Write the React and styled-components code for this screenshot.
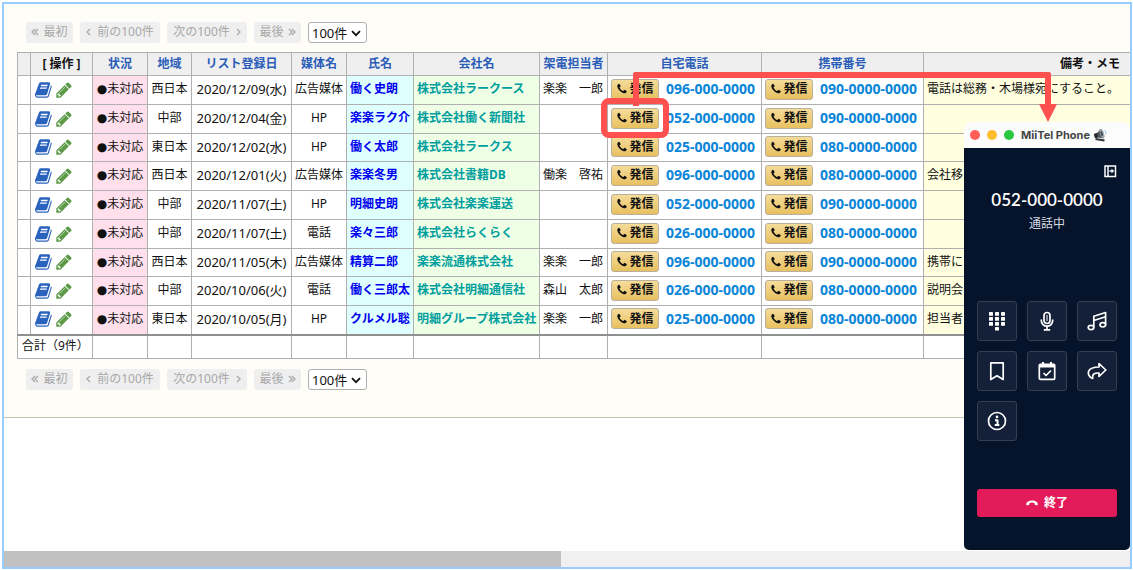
import React from "react";
import styled, { createGlobalStyle } from "styled-components";

const rows = [
  ["西日本", "2020/12/09(水)", "広告媒体", "働く史朗", "株式会社ラークース", "楽楽　一郎", "096-000-0000", "090-0000-0000", "電話は総務・木場様宛にすること。"],
  ["中部", "2020/12/04(金)", "HP", "楽楽ラク介", "株式会社働く新聞社", "", "052-000-0000", "090-0000-0000", ""],
  ["東日本", "2020/12/02(水)", "HP", "働く太郎", "株式会社ラークス", "", "025-000-0000", "080-0000-0000", ""],
  ["西日本", "2020/12/01(火)", "広告媒体", "楽楽冬男", "株式会社書籍DB", "働楽　啓祐", "096-000-0000", "080-0000-0000", "会社移"],
  ["中部", "2020/11/07(土)", "HP", "明細史朗", "株式会社楽楽運送", "", "052-000-0000", "090-0000-0000", ""],
  ["中部", "2020/11/07(土)", "電話", "楽々三郎", "株式会社らくらく", "", "026-000-0000", "080-0000-0000", ""],
  ["西日本", "2020/11/05(木)", "広告媒体", "精算二郎", "楽楽流通株式会社", "楽楽　一郎", "096-000-0000", "090-0000-0000", "携帯に"],
  ["中部", "2020/10/06(火)", "電話", "働く三郎太", "株式会社明細通信社", "森山　太郎", "026-000-0000", "080-0000-0000", "説明会"],
  ["東日本", "2020/10/05(月)", "HP", "クルメル聡", "明細グループ株式会社", "楽楽　一郎", "025-000-0000", "080-0000-0000", "担当者"],
];

const columns = [
  { label: "", width: 13 },
  { label: "[ 操作 ]", width: 62, plain: true },
  { label: "状況", width: 55 },
  { label: "地域", width: 44 },
  { label: "リスト登録日", width: 100 },
  { label: "媒体名", width: 55 },
  { label: "氏名", width: 67 },
  { label: "会社名", width: 126 },
  { label: "架電担当者", width: 68 },
  { label: "自宅電話", width: 154 },
  { label: "携帯番号", width: 162 },
];

const BookIcon = () => (
  <svg width="18" height="18" viewBox="0 0 1792 1792" fill="#2a63bd" aria-hidden="true">
    <path d="M1639 478q40 57 18 129l-275 906q-19 64-76.5 107.5t-122.5 43.5h-923q-77 0-148.5-53.5t-99.5-131.5q-24-67-2-127 0-4 3-27t4-37q1-8-3-21.5t-3-19.5q2-11 8-21t16.5-23.5 16.5-23.5q23-38 45-91.5t30-91.5q3-10 .5-30t-.5-28q3-11 17-28t17-23q21-36 42-92t25-90q1-9-2.5-32t.5-28q4-13 22-30.5t22-22.5q19-26 42.5-84.5t27.5-96.5q1-8-3-25.5t-2-26.5q2-8 9-18t18-23 17-21q8-12 16.5-30.5t15-35 16-36 19.5-32 26.5-23.5 36-11.5 47.5 5.5l-1 3q38-9 51-9h761q74 0 114 56t18 130l-274 906q-36 119-71.5 153.5t-128.5 34.5h-869q-27 0-38 15-11 16-1 43 24 70 144 70h923q29 0 56-15.5t35-41.5l300-987q7-22 5-57 38 15 59 43zm-1064 2q-4 13 2 22.5t20 9.5h608q13 0 25.5-9.5t16.5-22.5l21-64q4-13-2-22.5t-20-9.5h-608q-13 0-25.5 9.5t-16.5 22.5zm-83 256q-4 13 2 22.5t20 9.5h608q13 0 25.5-9.5t16.5-22.5l21-64q4-13-2-22.5t-20-9.5h-608q-13 0-25.5 9.5t-16.5 22.5z" />
  </svg>
);

const PencilIcon = () => (
  <svg width="18" height="18" viewBox="0 0 1792 1792" fill="#5c9a48" aria-hidden="true">
    <path d="M491 1536l91-91-235-235-91 91v107h128v128h107zm523-928q0-22-22-22-10 0-17 7l-542 542q-7 7-7 17 0 22 22 22 10 0 17-7l542-542q7-7 7-17zm-54-192l416 416-832 832h-416v-416zm683 96q0 53-37 90l-166 166-416-416 166-165q36-38 90-38 53 0 91 38l235 234q37 39 37 91z" />
  </svg>
);

const PhoneIcon = () => (
  <svg width="12" height="12" viewBox="0 0 1792 1792" fill="#111" aria-hidden="true">
    <path d="M1600 1240q0 27-10 70.5t-21 68.5q-21 50-122 106-94 51-186 51-27 0-53-3.5t-57.5-12.5-47-14.5-55.5-20.5-49-18q-98-35-175-83-127-79-264-216t-216-264q-48-77-83-175-3-9-18-49t-20.5-55.5-14.5-47-12.5-57.5-3.5-53q0-92 51-186 56-101 106-122 25-11 68.5-21t70.5-10q14 0 21 3 18 6 53 76 11 19 30 54t35 63.5 31 53.5q3 4 17.5 25t21.5 35.5 7 28.5q0 20-28.5 50t-62 55-62 53-28.5 46q0 9 5 22.5t8.5 20.5 14 24 11.5 19q76 137 174 235t235 174q2 1 19 11.5t24 14 20.5 8.5 22.5 5q18 0 46-28.5t53-62 55-62 50-28.5q14 0 28.5 7t35.5 21.5 25 17.5q25 15 53.5 31t63.5 35 54 30q70 35 76 53 3 7 3 21z" />
  </svg>
);

const Chevron = ({ double, right }) => (
  <svg width={double ? 8 : 5} height="8" viewBox={double ? "0 0 8 8" : "0 0 5 8"} fill="none" stroke="currentColor" strokeWidth="1.3" aria-hidden="true">
    {right ? (
      <path d={double ? "M1 1l3 3-3 3M4 1l3 3-3 3" : "M1 1l3 3-3 3"} />
    ) : (
      <path d={double ? "M4 1L1 4l3 3M7 1L4 4l3 3" : "M4 1L1 4l3 3"} />
    )}
  </svg>
);

const SpeakerIcon = () => (
  <svg width="14" height="14" viewBox="0 0 14 14" aria-hidden="true">
    <path d="M1 6l3-1 3.500-4 3 9.500-5.500-1-3 .5z" fill="#4c545c" />
    <path d="M1 6l3-1 1 4.500-3 .5z" fill="#23272b" />
    <ellipse cx="9" cy="5.500" rx="2" ry="5" transform="rotate(-18 9 5.500)" fill="#9aa7b2" />
    <ellipse cx="8.700" cy="5.600" rx=".9" ry="2.600" transform="rotate(-18 8.700 5.600)" fill="#3b4248" />
    <path d="M11.500 2q1.500 1.500 1.500 4" fill="none" stroke="#8fc0e0" />
    <path d="M2.500 11l9 1.500" stroke="#2d3236" strokeWidth="2" />
  </svg>
);

const PanelIcon = () => (
  <svg width="14" height="14" viewBox="0 0 14 14" fill="none" stroke="#fff" strokeWidth="1.500" aria-hidden="true">
    <path d="M2 2h10.500v10.500H2zM5 2v10.500M6.500 7h4" />
    <path d="M8.500 4.500L11 7 8.500 9.500z" fill="#fff" stroke="none" />
  </svg>
);

const HangUpIcon = () => (
  <svg width="12" height="6" viewBox="0 0 12 6" fill="#fff" aria-hidden="true">
    <path d="M6 .5C9 .5 11.800 2 11.800 3.800q0 1-.6 1.600L8.700 4.700 8.400 2.900Q6 2.200 3.600 2.900l-.3 1.800-2.500.7Q.2 4.800.2 3.800.2 2 3 1q1.400-.5 3-.5z" />
  </svg>
);

const icons = {
  キーパッド: (
    <g fill="#fff" stroke="none">
      {[1, 6, 11].map((y) =>
        [2, 8, 14].map((x) => <rect key={`${x}-${y}`} x={x} y={y} width="4" height="3.800" rx=".6" />)
      )}
      <rect x="8" y="16" width="4" height="3.500" rx=".6" />
    </g>
  ),
  ミュート: (
    <>
      <rect x="7" y="1.500" width="6" height="11" rx="3" />
      <path d="M10 4v6" strokeWidth="1" />
      <path d="M4.300 8.500v1a5.700 5.700 0 0 0 11.400 0v-1M10 15.500v3M6.800 18.800h6.400" />
    </>
  ),
  保留: (
    <>
      <ellipse cx="4" cy="16.500" rx="2.800" ry="2.200" />
      <ellipse cx="15.800" cy="13.800" rx="2.800" ry="2.200" />
      <path d="M6.800 16.500V5.200l11.800-3.700v12.300M6.800 9.500l11.800-3.700" />
    </>
  ),
  ブックマーク: <path d="M3.800 1.800h12.400v16.700L10 14.800l-6.200 3.700z" />,
  予定: (
    <>
      <rect x="2.300" y="3.300" width="15.400" height="15" rx="1" />
      <path d="M2.500 5h15" strokeWidth="3" />
      <path d="M6 1v4M14 1v4" strokeWidth="2.200" />
      <path d="M6.500 12l2.500 2.500L14 9.500" />
    </>
  ),
  転送: <path d="M12 2.500l6.800 6.500L12 15.500V12C7.500 11.800 4.800 13 5.800 17.500 2 16.500.6 12.500 1.800 9.800 3.200 6.800 6.500 6.100 12 6z" />,
  情報: (
    <>
      <circle cx="10" cy="10" r="8.500" />
      <path d="M8 9.200h2.500v4.600M7.800 14h4.500" strokeWidth="2" />
      <circle cx="10" cy="5.900" r="1.300" fill="#fff" stroke="none" />
    </>
  ),
};

function Pager({ label }) {
  return (
    <PagerBar aria-label={label}>
      <PageButton disabled $narrow>
        <Chevron double />
        最初
      </PageButton>
      <PageButton disabled>
        <Chevron />
        前の100件
      </PageButton>
      <PageButton disabled>
        次の100件
        <Chevron right />
      </PageButton>
      <PageButton disabled $narrow>
        最後
        <Chevron double right />
      </PageButton>
      <SelectWrap>
        <Select aria-label="表示件数" defaultValue="100">
          <option value="100">100件</option>
        </Select>
        <svg width="10" height="7" viewBox="0 0 10 7" fill="none" stroke="#111" strokeWidth="1.800" aria-hidden="true">
          <path d="M1 1.200l4 4 4-4" />
        </svg>
      </SelectWrap>
    </PagerBar>
  );
}

function PhoneCell({ number }) {
  return (
    <PhoneLine>
      <CallButton>
        <PhoneIcon />
        発信
      </CallButton>
      <PhoneLink href={`tel:${number}`}>{number}</PhoneLink>
    </PhoneLine>
  );
}

function CallList() {
  return (
    <Table>
      <colgroup>
        {columns.map((c, i) => (
          <Col key={i} $width={c.width} />
        ))}
        <col />
      </colgroup>
      <thead>
        <tr>
          {columns.map((c, i) => (
            <Th key={i} $plain={c.plain}>
              {c.label}
            </Th>
          ))}
          <Th $plain $align="right">
            備考・メモ
          </Th>
        </tr>
      </thead>
      <tbody>
        {rows.map(([area, date, media, name, company, staff, home, mobile, memo], i) => (
          <Row key={i}>
            <Td />
            <Td>
              <Actions>
                <IconButton aria-label="詳細">
                  <BookIcon />
                </IconButton>
                <IconButton aria-label="編集">
                  <PencilIcon />
                </IconButton>
              </Actions>
            </Td>
            <Td $align="center" $bg="#ffdfec">
              <Bullet>●</Bullet>未対応
            </Td>
            <Td $align="center">{area}</Td>
            <DateTd>{date}</DateTd>
            <Td $align="center">{media}</Td>
            <Td $bg="#dfffff">
              <NameLink href="#name">{name}</NameLink>
            </Td>
            <Td $bg="#efffe6">
              <CompanyLink href="#company">{company}</CompanyLink>
            </Td>
            <Td>{staff}</Td>
            <Td>
              <PhoneCell number={home} />
            </Td>
            <Td>
              <PhoneCell number={mobile} />
            </Td>
            <Td $bg="#ffffe0">{memo}</Td>
          </Row>
        ))}
      </tbody>
      <tfoot>
        <tr>
          <TotalTd colSpan={2}>合計（9件）</TotalTd>
          {Array.from({ length: 10 }, (_, i) => (
            <TotalTd key={i} />
          ))}
        </tr>
      </tfoot>
    </Table>
  );
}

function PhoneWindow() {
  return (
    <Dialer>
      <TitleBar>
        <Dot $color="#ff5f57" />
        <Dot $color="#febc2e" />
        <Dot $color="#28c840" />
        <Title>MiiTel Phone</Title>
        <SpeakerIcon />
      </TitleBar>
      <DialerBody>
        <PanelButton aria-label="パネル">
          <PanelIcon />
        </PanelButton>
        <CallNumber>052-000-0000</CallNumber>
        <CallState>通話中</CallState>
        <Keys>
          {Object.entries(icons).map(([name, icon]) => (
            <Key key={name} aria-label={name}>
              <svg width="20" height="20" viewBox="0 0 20 20" fill="none" stroke="#fff" strokeWidth="1.700" strokeLinejoin="round">
                {icon}
              </svg>
            </Key>
          ))}
        </Keys>
        <EndButton>
          <HangUpIcon />
          終了
        </EndButton>
      </DialerBody>
    </Dialer>
  );
}

function App() {
  return (
    <Page>
      <GlobalStyle />
      <Frame>
        <ListArea>
          <Pager label="ページ送り（上）" />
          <CallList />
          <Pager label="ページ送り（下）" />
        </ListArea>
        <Blank />
        <ScrollTrack>
          <ScrollThumb />
        </ScrollTrack>
        <Connector />
        <Highlight />
        <ArrowHead width="18" height="18" viewBox="0 0 18 18" aria-hidden="true">
          <path d="M0 0h18L9 18z" fill="#ff5050" />
        </ArrowHead>
        <PhoneWindow />
      </Frame>
    </Page>
  );
}

const GlobalStyle = createGlobalStyle`
  * {
    box-sizing: border-box;
  }
  body {
    margin: 0;
    background: #fff;
    color: #111;
    font-family: "Noto Sans", "Noto Sans CJK JP", sans-serif;
    font-size: 12px;
    line-height: 16px;
  }
  button, select {
    font: inherit;
  }
  a {
    text-decoration: none;
  }
`;

const Page = styled.main`
  display: flex;
  min-height: 100vh;
  padding: 2px 1px 1px 2px;
`;

const Frame = styled.div`
  position: relative;
  display: flex;
  flex-direction: column;
  flex: 1;
  min-width: 0;
  border: 2px solid #99ccff;
  overflow: hidden;
`;

const ListArea = styled.section`
  background: #fffdf8;
  border-bottom: 1px solid #c3c3af;
  padding: 17px 0 27px 13px;
`;

const Blank = styled.div`
  flex: 1;
`;

const PagerBar = styled.nav`
  display: flex;
  align-items: center;
  gap: 7px;
  padding-left: 9px;
`;

const PageButton = styled.button`
  display: flex;
  align-items: center;
  justify-content: center;
  gap: ${(p) => (p.$narrow ? "4px" : "6px")};
  width: ${(p) => (p.$narrow ? "47px" : "80px")};
  height: 21px;
  padding: 0;
  border: none;
  border-radius: 3px;
  background: #efefef;
  color: #a8a8a8;
  white-space: nowrap;
`;

const SelectWrap = styled.div`
  position: relative;
  margin-top: 1px;
  svg {
    position: absolute;
    right: 6px;
    top: 8px;
    pointer-events: none;
  }
`;

const Select = styled.select`
  display: block;
  appearance: none;
  width: 59px;
  height: 21px;
  padding: 0 3px;
  border: 1px solid #b0b0b0;
  border-radius: 3px;
  background: #fff;
  color: #111;
  font-size: 13px;
  line-height: 18px;
`;

const Table = styled.table`
  width: 100%;
  margin: 9px 0;
  border-collapse: collapse;
  table-layout: fixed;
  background: #fff;
`;

const Col = styled.col`
  width: ${(p) => p.$width}px;
`;

const Th = styled.th`
  height: 23px;
  padding: 0 9px 1px;
  border: 1px solid #b0b0b0;
  border-right-color: ${(p) => (p.$align ? "transparent" : "#b0b0b0")};
  background: #efefef;
  color: ${(p) => (p.$plain ? "#111" : "#2a5db8")};
  font-weight: 700;
  text-align: ${(p) => p.$align || "center"};
  white-space: nowrap;

  &:not(:last-child) {
    padding-inline: 0;
  }
`;

const Row = styled.tr`
  height: 29px;

  &:nth-child(4n + 3) {
    height: 28px;
  }
`;

const Td = styled.td`
  padding: 0 3px 2px;
  border: 1px solid #b0b0b0;
  background: ${(p) => p.$bg || "#fff"};
  text-align: ${(p) => p.$align || "left"};
  white-space: nowrap;

  &:last-child {
    border-right: none;
  }
`;

const DateTd = styled(Td)`
  font-size: 13px;
  text-align: center;
`;

const TotalTd = styled(Td)`
  height: 24px;
  padding-left: 4px;
  border-top: 2px solid #909090;
`;

const Bullet = styled.span`
  font-family: "DejaVu Sans", sans-serif;
`;

const Actions = styled.div`
  display: flex;
  gap: 2px;
  padding: 1px 0 0 1px;
`;

const IconButton = styled.button`
  display: flex;
  padding: 0;
  border: none;
  background: none;
  cursor: pointer;
`;

const NameLink = styled.a`
  color: #0000ee;
  font-weight: 700;
`;

const CompanyLink = styled.a`
  color: #009e9e;
  font-weight: 700;
`;

const PhoneLine = styled.div`
  display: flex;
  align-items: center;
  gap: 7px;
`;

const CallButton = styled.button`
  display: flex;
  align-items: center;
  justify-content: center;
  gap: 1px;
  width: 48px;
  height: 21px;
  padding: 0;
  border: 1px solid #b8b09c;
  border-radius: 3px;
  background: linear-gradient(#f5dc9a, #e8c060);
  color: #111;
  font-weight: 700;
  cursor: pointer;
`;

const PhoneLink = styled.a`
  color: #0a85d8;
  font-size: 14px;
  font-weight: 700;
`;

const ScrollTrack = styled.div`
  height: 16px;
  background: #f0f0f0;
`;

const ScrollThumb = styled.div`
  width: 49.5%;
  height: 100%;
  background: #c1c1c1;
`;

/* call-out drawn over the list: from the call button to the phone window */
const Connector = styled.div`
  position: absolute;
  top: 68px;
  left: 629px;
  right: 79px;
  height: 34px;
  border: solid #ff5050;
  border-width: 6px 6px 0;
  border-radius: 3px 3px 0 0;
`;

const Highlight = styled.div`
  position: absolute;
  top: 94px;
  left: 597px;
  width: 68px;
  height: 40px;
  border: 6px solid #ff5050;
  border-radius: 8px;
`;

const ArrowHead = styled.svg`
  position: absolute;
  top: 100px;
  right: 73px;
`;

const Dialer = styled.aside`
  position: absolute;
  top: 118px;
  right: 0;
  width: 166px;
  border-radius: 8px 8px 5px 5px;
  overflow: hidden;
`;

const TitleBar = styled.header`
  display: flex;
  align-items: center;
  gap: 7px;
  height: 26px;
  padding-left: 6px;
  background: #fcfcfc;
`;

const Dot = styled.span`
  width: 10px;
  height: 10px;
  border-radius: 50%;
  background: ${(p) => p.$color};
`;

const Title = styled.strong`
  color: #444;
  font-family: Inter, sans-serif;
  font-size: 11px;
  font-weight: 700;
  white-space: nowrap;
  & + svg {
    margin-left: -4px;
  }
`;

const DialerBody = styled.div`
  display: flex;
  flex-direction: column;
  padding: 16px 13px 33px;
  background: #05132b;
`;

const PanelButton = styled(IconButton)`
  align-self: flex-end;
`;

const CallNumber = styled.div`
  margin-top: 12px;
  color: #fff;
  font-family: Lato, sans-serif;
  font-size: 17px;
  font-weight: 600;
  line-height: 20px;
  text-align: center;
`;

const CallState = styled.div`
  margin-top: 6px;
  color: #d5d9e0;
  text-align: center;
`;

const Keys = styled.div`
  display: grid;
  grid-template-columns: repeat(3, 40px);
  gap: 10px;
  margin-top: 69px;
`;

const Key = styled.button`
  display: flex;
  align-items: center;
  justify-content: center;
  height: 40px;
  padding: 0;
  border: 1px solid #363f52;
  border-radius: 3px;
  background: #142037;
  cursor: pointer;
`;

const EndButton = styled.button`
  display: flex;
  align-items: center;
  justify-content: center;
  gap: 6px;
  height: 28px;
  margin-top: 48px;
  border: none;
  border-radius: 3px;
  background: #e31b5a;
  color: #fff;
  font-weight: 700;
  cursor: pointer;
`;

export default App;
